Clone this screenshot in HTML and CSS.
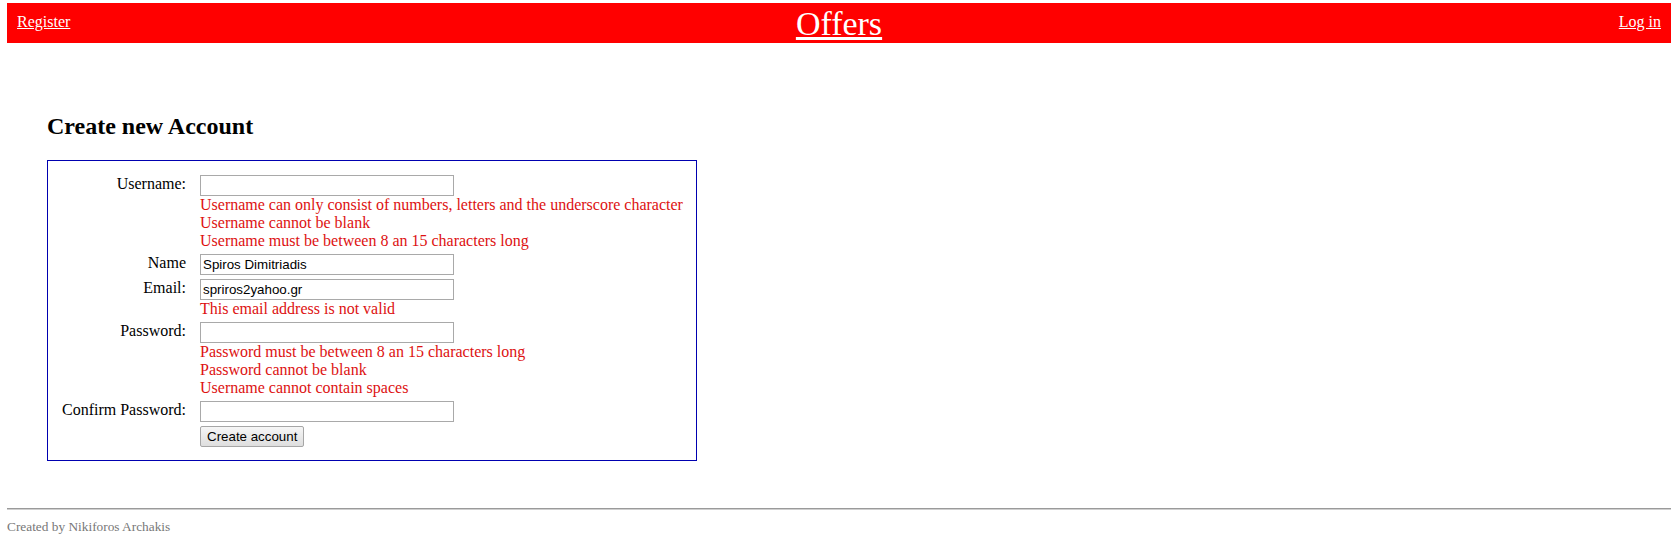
FILE: index.html
```html
<!DOCTYPE html>
<html>
<head>
<meta charset="utf-8">
<title>Offers - Create new Account</title>
<link rel="stylesheet" href="styles.css">
</head>
<body>
<header class="topbar">
  <div class="nav-left"><a href="#">Register</a></div>
  <div class="title"><a href="#">Offers</a></div>
  <div class="nav-right"><a href="#">Log in</a></div>
</header>

<main class="content">
  <h2 class="page-title">Create new Account</h2>
  <form class="account">
    <label class="lbl">Username:</label>
    <div class="field">
      <input class="txt" type="text" value="">
      <div class="error">Username can only consist of numbers, letters and the underscore character</div>
      <div class="error">Username cannot be blank</div>
      <div class="error">Username must be between 8 an 15 characters long</div>
    </div>

    <label class="lbl">Name</label>
    <div class="field">
      <input class="txt" type="text" value="Spiros Dimitriadis">
    </div>

    <label class="lbl">Email:</label>
    <div class="field">
      <input class="txt" type="text" value="spriros2yahoo.gr">
      <div class="error">This email address is not valid</div>
    </div>

    <label class="lbl">Password:</label>
    <div class="field">
      <input class="txt" type="password" value="">
      <div class="error">Password must be between 8 an 15 characters long</div>
      <div class="error">Password cannot be blank</div>
      <div class="error">Username cannot contain spaces</div>
    </div>

    <label class="lbl">Confirm Password:</label>
    <div class="field">
      <input class="txt" type="password" value="">
    </div>

    <span class="lbl"></span>
    <div class="field">
      <button class="btn" type="button">Create account</button>
    </div>
  </form>
</main>

<footer class="footer">
  <hr class="rule">
  <div class="credit">Created by Nikiforos Archakis</div>
</footer>
</body>
</html>
```

FILE: styles.css
```css
html, body {
  background: #ffffff;
}

body {
  margin: 3px 6px 0 7px;
  font-family: "Liberation Serif", "Times New Roman", serif;
  font-size: 16px;
  color: #000000;
}

.topbar {
  display: grid;
  grid-template-columns: 1fr auto 1fr;
  background: #ff0000;
  height: 40px;
  padding: 0 10px;
}

.topbar a {
  color: #ffffff;
  text-decoration: underline;
}

.nav-left,
.nav-right {
  padding-top: 10px;
  font-size: 16px;
  line-height: 18px;
}

.nav-right {
  justify-self: end;
}

.title {
  font-size: 34px;
  line-height: 41px;
}

.content {
  padding-left: 40px;
}

.page-title {
  margin: 69px 0 20px;
  font-size: 24px;
  line-height: 28px;
  font-weight: bold;
}

.account {
  display: grid;
  grid-template-columns: auto auto;
  column-gap: 14px;
  row-gap: 4px;
  width: fit-content;
  border: 1px solid #0000b0;
  padding: 14px 13px 13px 14px;
}

.lbl {
  text-align: right;
  line-height: 18px;
  white-space: nowrap;
}

.field {
  display: flex;
  flex-direction: column;
  align-items: flex-start;
}

.txt {
  display: block;
  box-sizing: border-box;
  width: 254px;
  height: 21px;
  margin: 0;
  padding: 1px 2px;
  border: 1px solid #a9a9a9;
  border-radius: 0;
  font-family: "Liberation Sans", Arial, sans-serif;
  font-size: 13.33px;
  color: #000000;
  background: #ffffff;
}

.error {
  color: #dd1111;
  line-height: 18px;
  white-space: nowrap;
}

.btn {
  display: block;
  box-sizing: border-box;
  height: 21px;
  margin: 0;
  padding: 0 6px;
  border: 1px solid #a6a6a6;
  border-radius: 2px;
  background: linear-gradient(#f6f6f6, #dedede);
  font-family: "Liberation Sans", Arial, sans-serif;
  font-size: 13.33px;
  color: #000000;
}

.footer {
  margin-top: 47px;
}

.rule {
  height: 0;
  margin: 0 0 9px;
  border: 0;
  border-top: 1px solid #9a9a9a;
  border-bottom: 1px solid #cfcfcf;
}

.credit {
  font-size: 13.33px;
  line-height: 15px;
  color: #777777;
}
```
